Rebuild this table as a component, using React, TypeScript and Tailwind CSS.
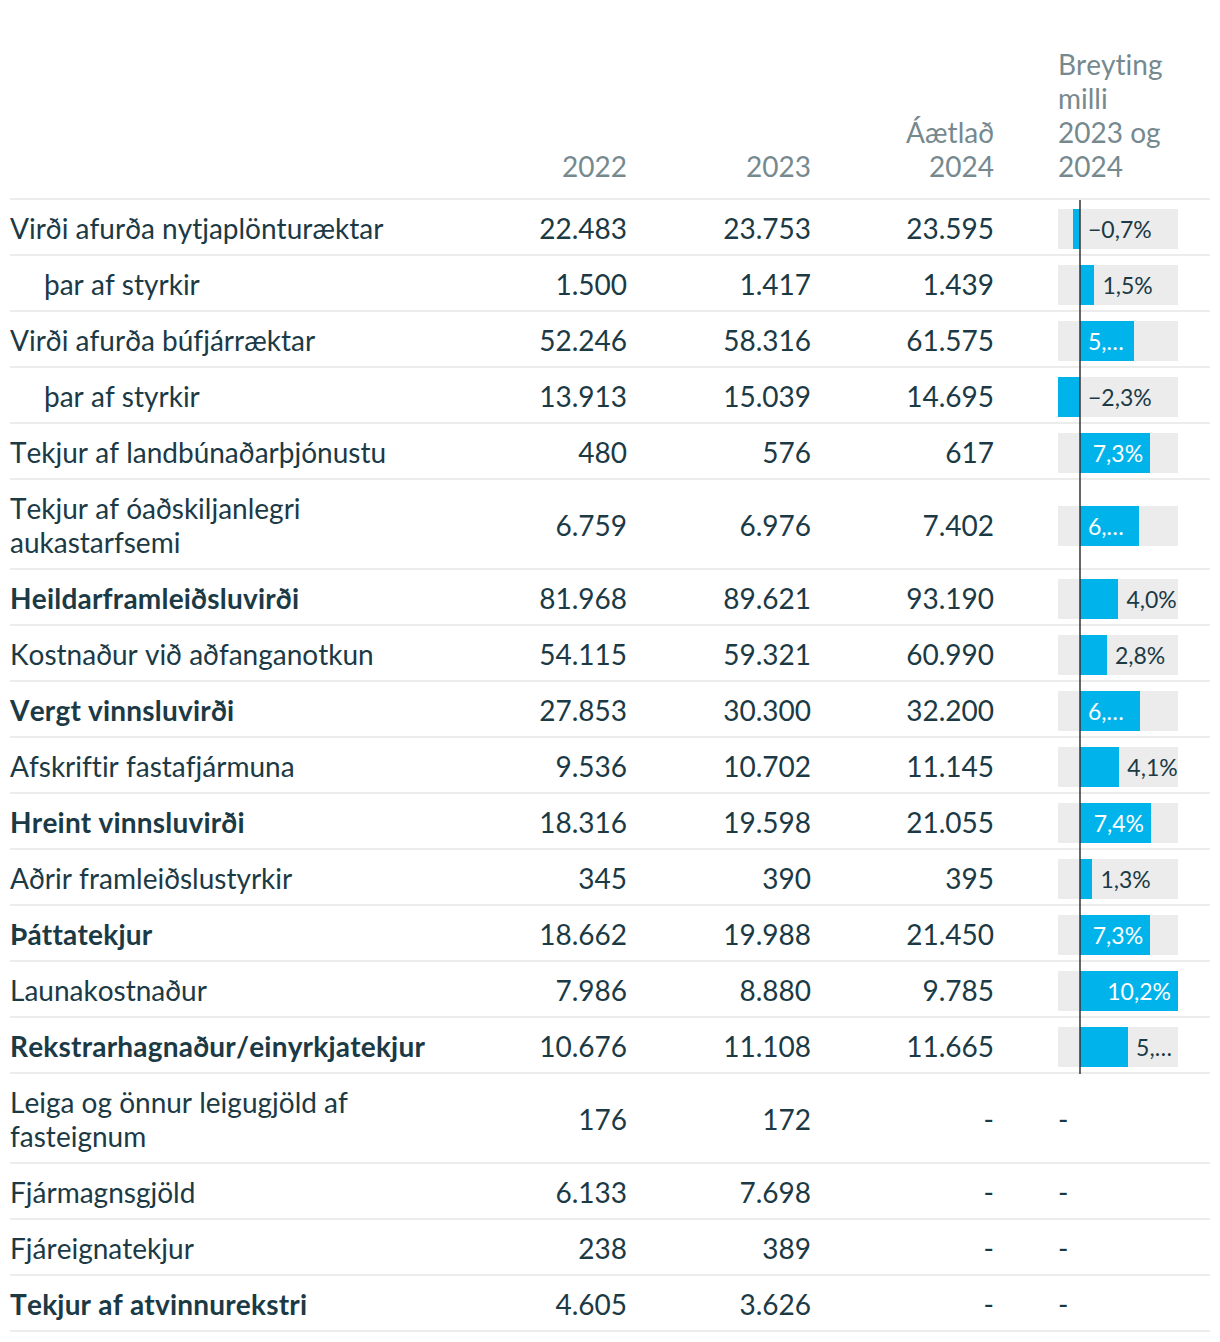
type Row = {
  label: string;
  v22: string;
  v23: string;
  v24: string;
  bold?: boolean;
  indent?: boolean;
  change?: number;
  text?: string;
  mode?: "in" | "out" | "cut";
};

const rows: Row[] = [
  { label: "Virði afurða nytjaplönturæktar", v22: "22.483", v23: "23.753", v24: "23.595", change: -0.7, text: "−0,7%", mode: "out" },
  { label: "þar af styrkir", indent: true, v22: "1.500", v23: "1.417", v24: "1.439", change: 1.5, text: "1,5%", mode: "out" },
  { label: "Virði afurða búfjárræktar", v22: "52.246", v23: "58.316", v24: "61.575", change: 5.59, text: "5,…", mode: "cut" },
  { label: "þar af styrkir", indent: true, v22: "13.913", v23: "15.039", v24: "14.695", change: -2.3, text: "−2,3%", mode: "out" },
  { label: "Tekjur af landbúnaðarþjónustu", v22: "480", v23: "576", v24: "617", change: 7.3, text: "7,3%", mode: "in" },
  { label: "Tekjur af óaðskiljanlegri aukastarfsemi", v22: "6.759", v23: "6.976", v24: "7.402", change: 6.11, text: "6,…", mode: "cut" },
  { label: "Heildarframleiðsluvirði", bold: true, v22: "81.968", v23: "89.621", v24: "93.190", change: 4.0, text: "4,0%", mode: "out" },
  { label: "Kostnaður við aðfanganotkun", v22: "54.115", v23: "59.321", v24: "60.990", change: 2.8, text: "2,8%", mode: "out" },
  { label: "Vergt vinnsluvirði", bold: true, v22: "27.853", v23: "30.300", v24: "32.200", change: 6.27, text: "6,…", mode: "cut" },
  { label: "Afskriftir fastafjármuna", v22: "9.536", v23: "10.702", v24: "11.145", change: 4.1, text: "4,1%", mode: "out" },
  { label: "Hreint vinnsluvirði", bold: true, v22: "18.316", v23: "19.598", v24: "21.055", change: 7.4, text: "7,4%", mode: "in" },
  { label: "Aðrir framleiðslustyrkir", v22: "345", v23: "390", v24: "395", change: 1.3, text: "1,3%", mode: "out" },
  { label: "Þáttatekjur", bold: true, v22: "18.662", v23: "19.988", v24: "21.450", change: 7.3, text: "7,3%", mode: "in" },
  { label: "Launakostnaður", v22: "7.986", v23: "8.880", v24: "9.785", change: 10.2, text: "10,2%", mode: "in" },
  { label: "Rekstrarhagnaður/einyrkjatekjur", bold: true, v22: "10.676", v23: "11.108", v24: "11.665", change: 5.01, text: "5,…", mode: "out" },
  { label: "Leiga og önnur leigugjöld af fasteignum", v22: "176", v23: "172", v24: "-" },
  { label: "Fjármagnsgjöld", v22: "6.133", v23: "7.698", v24: "-" },
  { label: "Fjáreignatekjur", v22: "238", v23: "389", v24: "-" },
  { label: "Tekjur af atvinnurekstri", bold: true, v22: "4.605", v23: "3.626", v24: "-" },
];

// scale: -2.3 .. 10.2 over 120px, zero at 22px
const PX = 9.6;
const ZERO = 22;

function ChangeBar({ value, text, mode }: { value: number; text: string; mode: string }) {
  const w = Math.abs(value) * PX;
  const left = value < 0 ? ZERO - w : ZERO;
  const end = value < 0 ? ZERO : ZERO + w;
  const labelStyle =
    mode === "in"
      ? { right: 120 - end + 7 }
      : mode === "cut"
        ? { left: ZERO + 8 }
        : { left: end + 8 };
  return (
    <div className="relative h-10 w-[120px] bg-[#ececec]">
      <div className="absolute top-0 h-full bg-[#00b4eb]" style={{ left, width: w }} />
      <span
        className={`absolute top-0 flex h-full items-center whitespace-nowrap text-[23px] ${
          mode === "out" ? "text-[#1b3a45]" : "text-white"
        }`}
        style={labelStyle}
      >
        {text}
      </span>
    </div>
  );
}

export default function App() {
  return (
    <div className="min-h-screen bg-white px-[10px] pt-[47px] font-[Lato,sans-serif] text-[28px] leading-[34px] text-[#1b3a45] [font-kerning:none] [font-variant-ligatures:none]">
      <div className="grid grid-cols-[1fr_140px_184px_183px_216px] items-end border-b-2 border-[#ececec] pb-[15px] text-[#76898f]">
        <div />
        <div className="text-right">2022</div>
        <div className="text-right">2023</div>
        <div className="text-right">
          Áætlað
          <br />
          2024
        </div>
        <div className="pl-[64px]">
          Breyting
          <br />
          milli
          <br />
          2023 og
          <br />
          2024
        </div>
      </div>

      {rows.map((r, i) => (
        <div
          key={i}
          className="grid grid-cols-[1fr_140px_184px_183px_216px] items-center border-b-2 border-[#ececec]"
        >
          <div
            className={`pr-[40px] pt-[11px] pb-[9px] ${r.indent ? "pl-[34px]" : ""} ${
              r.bold ? "font-bold tracking-[0.2px]" : ""
            }`}
          >
            {r.label}
          </div>
          <div className="pt-[11px] pb-[9px] text-right">{r.v22}</div>
          <div className="pt-[11px] pb-[9px] text-right">{r.v23}</div>
          <div className="pt-[11px] pb-[9px] text-right">{r.v24}</div>
          {r.change !== undefined ? (
            <div className="relative flex self-stretch items-center pl-[64px] pt-[4px]">
              <ChangeBar value={r.change} text={r.text ?? ""} mode={r.mode ?? "out"} />
              <div className="absolute left-[85px] top-0 bottom-[-2px] w-[2px] bg-[#333]/75" />
            </div>
          ) : (
            <div className="pl-[64px] pt-[11px] pb-[9px]">-</div>
          )}
        </div>
      ))}
    </div>
  );
}
